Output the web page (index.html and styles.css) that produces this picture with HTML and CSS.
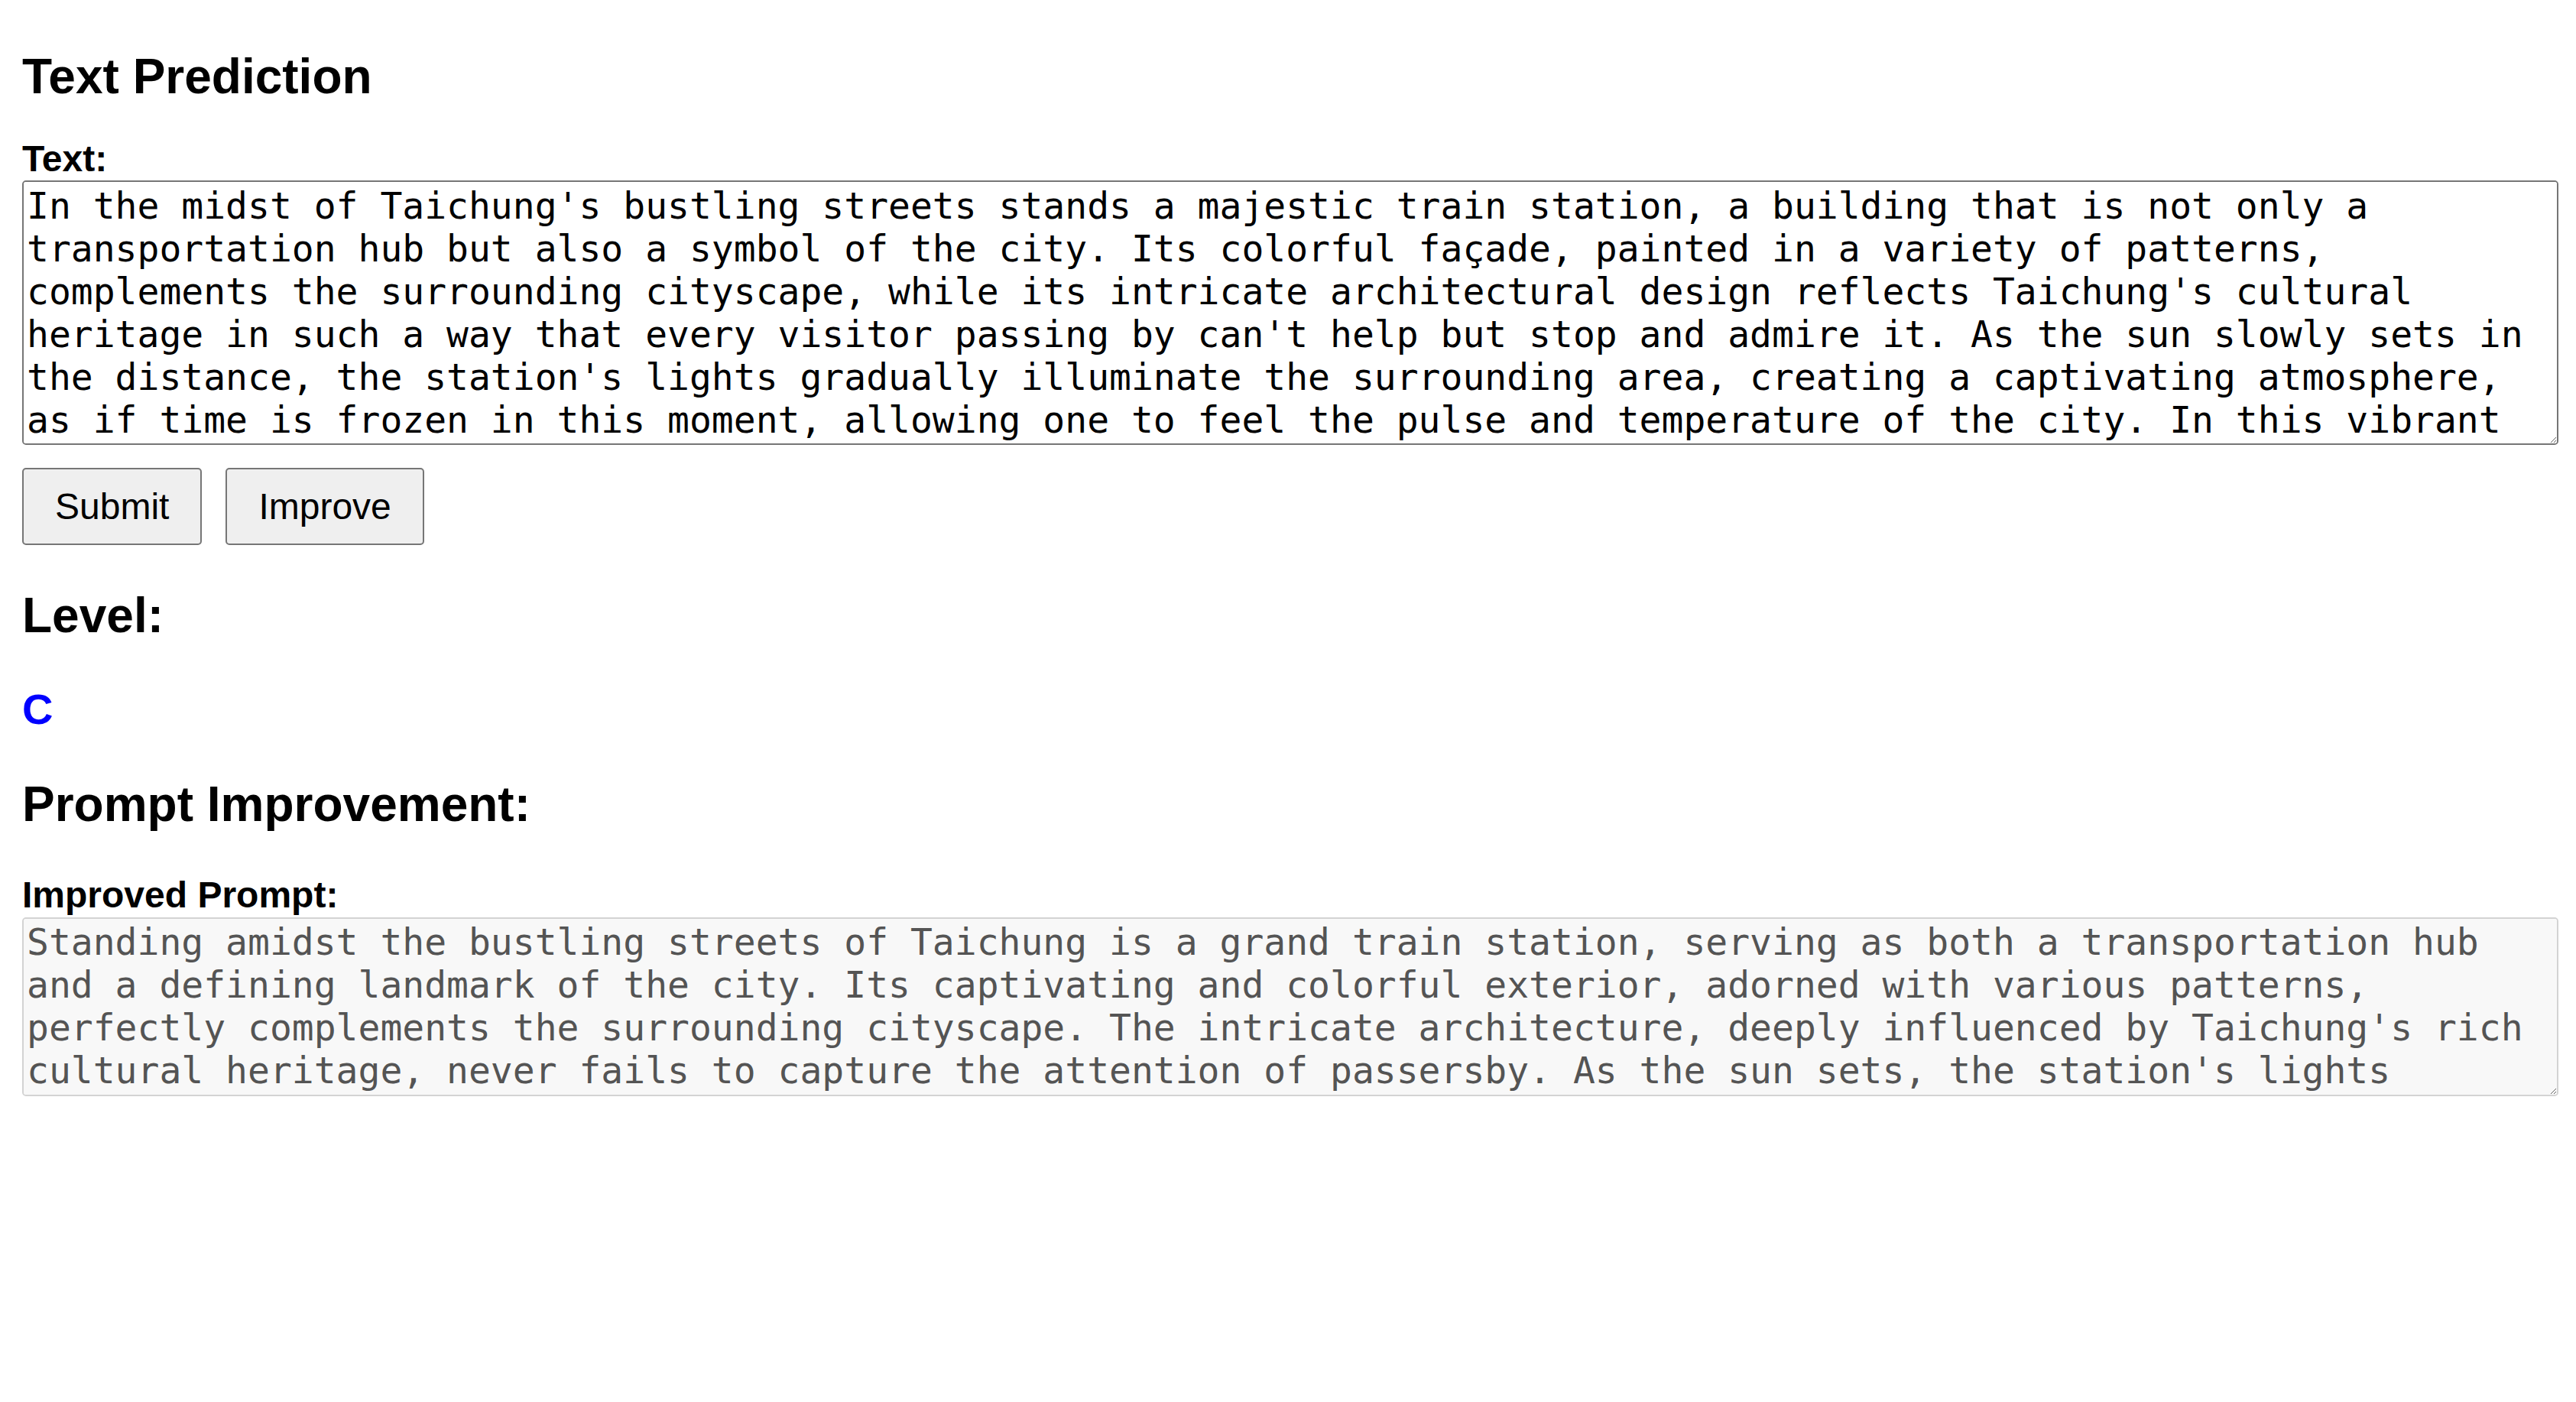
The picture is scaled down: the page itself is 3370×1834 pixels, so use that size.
FILE: index.html
```html
<!DOCTYPE html>
<html lang="en">
<head>
<meta charset="utf-8">
<title>Text Prediction</title>
<link rel="stylesheet" href="styles.css">
</head>
<body>
<main class="page">
  <h2 class="title">Text Prediction</h2>
  <label class="field-label" for="text">Text:</label>
  <textarea id="text" class="text-box text-box--input">In the midst of Taichung's bustling streets stands a majestic train station, a building that is not only a transportation hub but also a symbol of the city. Its colorful façade, painted in a variety of patterns, complements the surrounding cityscape, while its intricate architectural design reflects Taichung's cultural heritage in such a way that every visitor passing by can't help but stop and admire it. As the sun slowly sets in the distance, the station's lights gradually illuminate the surrounding area, creating a captivating atmosphere, as if time is frozen in this moment, allowing one to feel the pulse and temperature of the city. In this vibrant city, the station stands as a bridge between the past and the future, welcoming travelers from every corner of the island.</textarea>
  <div class="actions">
    <button class="btn" type="button">Submit</button>
    <button class="btn" type="button">Improve</button>
  </div>
  <h2 class="section-title section-title--level">Level:</h2>
  <p class="level-value">C</p>
  <h2 class="section-title section-title--prompt">Prompt Improvement:</h2>
  <label class="field-label field-label--improved" for="improved">Improved Prompt:</label>
  <textarea id="improved" class="text-box text-box--readonly" readonly>Standing amidst the bustling streets of Taichung is a grand train station, serving as both a transportation hub and a defining landmark of the city. Its captivating and colorful exterior, adorned with various patterns, perfectly complements the surrounding cityscape. The intricate architecture, deeply influenced by Taichung's rich cultural heritage, never fails to capture the attention of passersby. As the sun sets, the station's lights gradually illuminate the surrounding area, creating a mesmerizing ambiance that invites one to pause and feel the heartbeat of the city.</textarea>
</main>
</body>
</html>
```

FILE: styles.css
```css
html, body {
  margin: 0;
  padding: 0;
  background: #ffffff;
}

body {
  font-family: "Liberation Sans", Arial, Helvetica, sans-serif;
  color: #000000;
}

.page {
  display: flow-root;
  padding: 0 23px 0 29px;
}

.title,
.section-title {
  font-size: 64px;
  font-weight: bold;
  line-height: normal;
  margin: 0;
}

.title {
  margin-top: 63px;
}

.field-label {
  display: block;
  font-size: 48px;
  font-weight: bold;
  line-height: normal;
  margin-top: 43px;
  margin-bottom: 1px;
}

.field-label--improved {
  margin-top: 54px;
  margin-bottom: 2px;
}

.text-box {
  display: block;
  box-sizing: border-box;
  width: 3318px;
  margin: 0;
  padding: 3px 3px 3px 4px;
  font-family: "DejaVu Sans Mono", "Liberation Mono", monospace;
  font-size: 48px;
  line-height: normal;
  border-radius: 5px;
  scrollbar-width: none;
  overflow-y: auto;
}

.text-box--input {
  height: 346px;
  border: 2px solid #767676;
  color: #000000;
  background: #ffffff;
}

.text-box--readonly {
  height: 234px;
  padding-top: 2px;
  padding-bottom: 2px;
  border: 2px solid #d3d3d3;
  color: #545454;
  background: #f8f8f8;
}

.actions {
  display: flex;
  gap: 31px;
  margin-top: 30px;
}

.btn {
  font-family: "Liberation Sans", Arial, Helvetica, sans-serif;
  font-size: 48px;
  line-height: normal;
  padding: 21px 41px;
  border: 2px solid #767676;
  border-radius: 5px;
  background: #efefef;
  color: #000000;
}

.section-title--level {
  margin-top: 55px;
}

.level-value {
  margin: 53px 0 0;
  font-size: 56px;
  font-weight: bold;
  line-height: normal;
  color: #0000ff;
}

.section-title--prompt {
  margin-top: 55px;
}
```
